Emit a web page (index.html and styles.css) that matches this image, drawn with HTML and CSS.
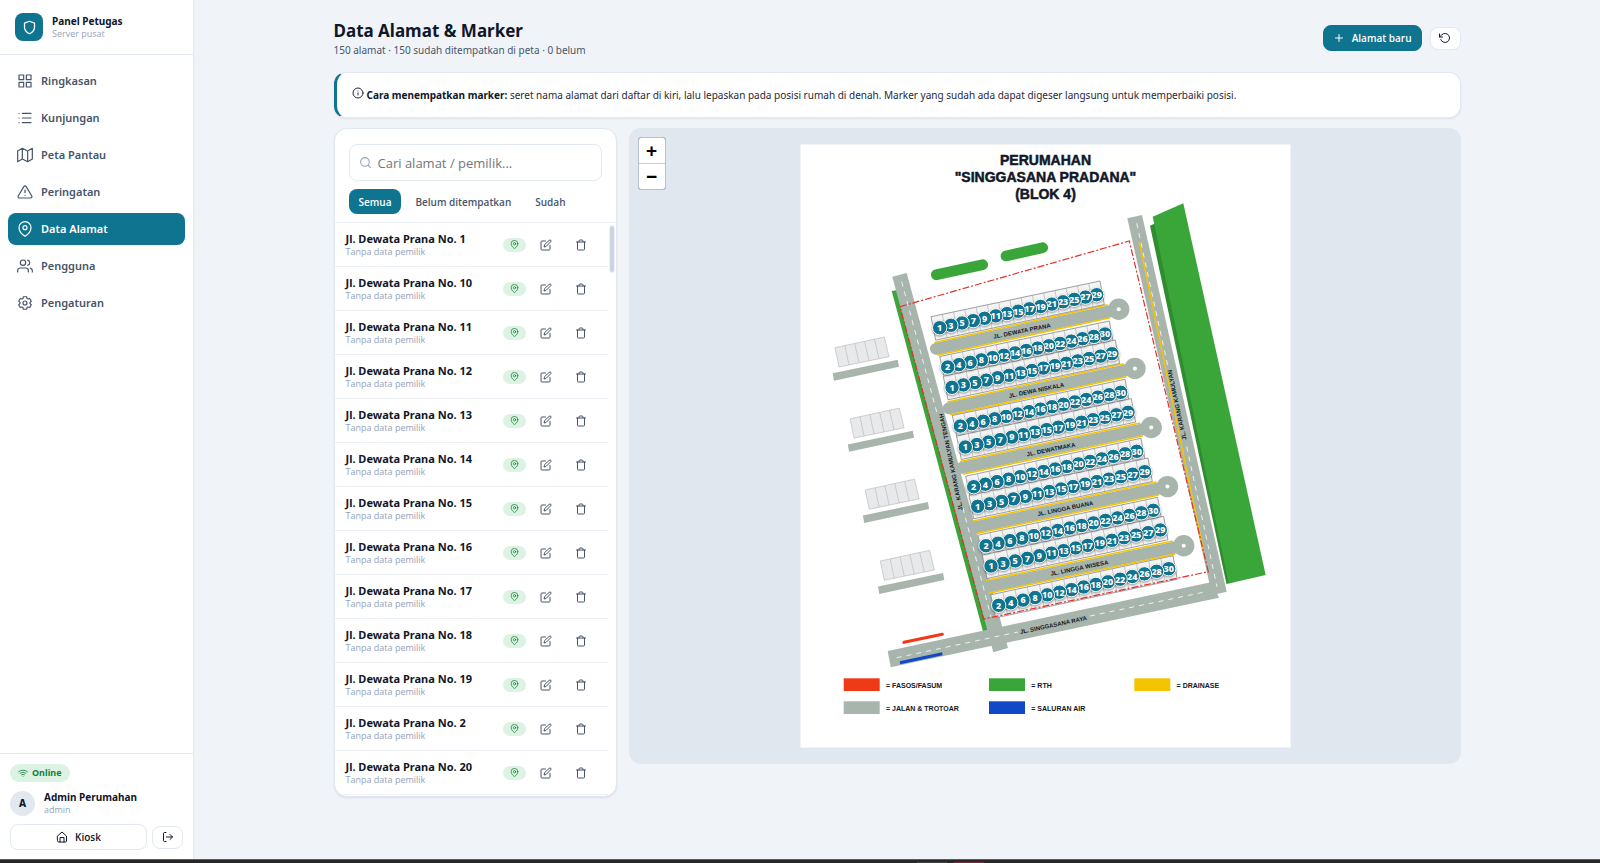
FILE: index.html
```html
<!DOCTYPE html>
<html lang="id">
<head>
<meta charset="utf-8">
<meta name="viewport" content="width=device-width, initial-scale=1">
<title>Data Alamat &amp; Marker</title>
<link rel="stylesheet" href="styles.css">
</head>
<body>
<svg class="sprite" aria-hidden="true">
  <symbol id="i-shield" viewBox="0 0 24 24"><path d="M12 22s8-4 8-10V5l-8-3-8 3v7c0 6 8 10 8 10z"/></symbol>
  <symbol id="i-grid" viewBox="0 0 24 24"><path d="M3 3h7v7H3zM14 3h7v7h-7zM14 14h7v7h-7zM3 14h7v7H3z"/></symbol>
  <symbol id="i-list" viewBox="0 0 24 24"><path d="M8 5h13M8 12h13M8 19h13M3 5h.01M3 12h.01M3 19h.01"/></symbol>
  <symbol id="i-map" viewBox="0 0 24 24"><path d="M1 6v16l7-4 8 4 7-4V2l-7 4-8-4zM8 2v16M16 6v16"/></symbol>
  <symbol id="i-alert" viewBox="0 0 24 24"><path d="M10.3 3.9 1.8 18a2 2 0 0 0 1.7 3h17a2 2 0 0 0 1.7-3L13.7 3.9a2 2 0 0 0-3.4 0zM12 9v4M12 17h.01"/></symbol>
  <symbol id="i-pin" viewBox="0 0 24 24"><path d="M21 10c0 7-9 13-9 13s-9-6-9-13a9 9 0 0 1 18 0z"/><circle cx="12" cy="10" r="3"/></symbol>
  <symbol id="i-users" viewBox="0 0 24 24"><path d="M17 21v-2a4 4 0 0 0-4-4H5a4 4 0 0 0-4 4v2M23 21v-2a4 4 0 0 0-3-3.9M16 3.1a4 4 0 0 1 0 7.8"/><circle cx="9" cy="7" r="4"/></symbol>
  <symbol id="i-cog" viewBox="0 0 24 24"><path d="M9.6 2.6h4.800l.7 2.700 1.300.7 2.700-.8 2.400 4.100-2 2v1.400l2 2-2.400 4.100-2.700-.8-1.300.7-.7 2.700H9.600l-.7-2.700-1.300-.7-2.700.8-2.400-4.100 2-2v-1.400l-2-2 2.400-4.100 2.700.8 1.300-.7z"/><circle cx="12" cy="12" r="3"/></symbol>
  <symbol id="i-info" viewBox="0 0 24 24"><circle cx="12" cy="12" r="10"/><path d="M12 16v-4M12 8h.01"/></symbol>
  <symbol id="i-search" viewBox="0 0 24 24"><circle cx="11" cy="11" r="8"/><path d="m21 21-4.300-4.300"/></symbol>
  <symbol id="i-edit" viewBox="0 0 24 24"><path d="M11 4H4a2 2 0 0 0-2 2v14a2 2 0 0 0 2 2h14a2 2 0 0 0 2-2v-7"/><path d="M18.500 2.500a2.100 2.100 0 0 1 3 3L12 15l-4 1 1-4z"/></symbol>
  <symbol id="i-trash" viewBox="0 0 24 24"><path d="M3 6h18M19 6v14a2 2 0 0 1-2 2H7a2 2 0 0 1-2-2V6M8 6V4a2 2 0 0 1 2-2h4a2 2 0 0 1 2 2v2"/></symbol>
  <symbol id="i-plus" viewBox="0 0 24 24"><path d="M12 5v14M5 12h14"/></symbol>
  <symbol id="i-reset" viewBox="0 0 24 24"><path d="M1 4v6h6M3.500 15a9 9 0 1 0 2.100-9.400L1 10"/></symbol>
  <symbol id="i-wifi" viewBox="0 0 24 24"><path d="M1.400 9a16 16 0 0 1 21.200 0M5 12.600a11 11 0 0 1 14 0M8.500 16.100a6 6 0 0 1 7 0M12 20h.01"/></symbol>
  <symbol id="i-home" viewBox="0 0 24 24"><path d="M3 10l9-8 9 8v10a2 2 0 0 1-2 2H5a2 2 0 0 1-2-2zM8 22v-9h8v9"/></symbol>
  <symbol id="i-out" viewBox="0 0 24 24"><path d="M8 3H5a2 2 0 0 0-2 2v14a2 2 0 0 0 2 2h3M16 17l5-5-5-5M21 12H9"/></symbol>
</svg>

<div class="app">
  <aside class="sidebar">
    <div class="brand">
      <span class="brand-logo"><svg class="icon"><use href="#i-shield"/></svg></span>
      <div class="stack"><strong class="name">Panel Petugas</strong><span class="muted">Server pusat</span></div>
    </div>
    <nav class="nav">
      <a class="nav-item" href="#ringkasan"><svg class="icon"><use href="#i-grid"/></svg>Ringkasan</a>
      <a class="nav-item" href="#kunjungan"><svg class="icon"><use href="#i-list"/></svg>Kunjungan</a>
      <a class="nav-item" href="#peta"><svg class="icon"><use href="#i-map"/></svg>Peta Pantau</a>
      <a class="nav-item" href="#peringatan"><svg class="icon"><use href="#i-alert"/></svg>Peringatan</a>
      <a class="nav-item active" href="#alamat" aria-current="page"><svg class="icon"><use href="#i-pin"/></svg>Data Alamat</a>
      <a class="nav-item" href="#pengguna"><svg class="icon"><use href="#i-users"/></svg>Pengguna</a>
      <a class="nav-item" href="#pengaturan"><svg class="icon"><use href="#i-cog"/></svg>Pengaturan</a>
    </nav>
    <div class="account">
      <span class="status"><svg class="icon"><use href="#i-wifi"/></svg>Online</span>
      <div class="user">
        <span class="avatar">A</span>
        <div class="stack"><strong class="name">Admin Perumahan</strong><span class="muted">admin</span></div>
      </div>
      <div class="account-actions">
        <button class="btn kiosk" type="button"><svg class="icon"><use href="#i-home"/></svg>Kiosk</button>
        <button class="btn square" type="button" aria-label="Keluar"><svg class="icon"><use href="#i-out"/></svg></button>
      </div>
    </div>
  </aside>

  <main class="main">
    <div class="content">
      <header class="page-head">
        <div>
          <h1>Data Alamat &amp; Marker</h1>
          <p class="summary">150 alamat · 150 sudah ditempatkan di peta · 0 belum</p>
        </div>
        <div class="head-actions">
          <button class="btn primary" type="button"><svg class="icon"><use href="#i-plus"/></svg>Alamat baru</button>
          <button class="btn square" type="button" aria-label="Muat ulang"><svg class="icon"><use href="#i-reset"/></svg></button>
        </div>
      </header>

      <section class="hint">
        <svg class="icon"><use href="#i-info"/></svg>
        <p><strong>Cara menempatkan marker:</strong> seret nama alamat dari daftar di kiri, lalu lepaskan pada posisi rumah di denah. Marker yang sudah ada dapat digeser langsung untuk memperbaiki posisi.</p>
      </section>

      <div class="workspace">
        <section class="panel">
          <div class="filters">
            <label class="search"><svg class="icon"><use href="#i-search"/></svg><input type="search" placeholder="Cari alamat / pemilik..." aria-label="Cari alamat atau pemilik"></label>
            <div class="tabs">
              <button class="tab active" type="button">Semua</button>
              <button class="tab" type="button">Belum ditempatkan</button>
              <button class="tab" type="button">Sudah</button>
            </div>
          </div>
          <div class="list-wrap">
            <ul class="list" id="list"></ul>
            <div class="scrollbar"><span class="thumb"></span></div>
          </div>
        </section>

        <section class="map">
          <svg class="plan" viewBox="629 128 832 636" role="img" aria-label="Denah perumahan">
            <rect x="800.500" y="144.500" width="490" height="603" fill="#fff"/>
            <g class="plan-title">
              <text x="1045.500" y="165">PERUMAHAN</text>
              <text x="1045.500" y="182">"SINGGASANA PRADANA"</text>
              <text x="1045.500" y="199">(BLOK 4)</text>
            </g>
            <path class="rth-dark" d="M1150 225.700 1156 223 1234 582 1226.500 584z"/>
            <path class="rth" d="M1152.700 216.700 1183.300 203.300 1265.700 575 1228.700 583.600z"/>
            <path class="rth" d="M891.700 291 898 290 989 630 983 631.500z"/>
            <path class="rth-line" d="M936.300 274.700 982.700 264.700M1006 256 1042.700 247.700"/>
            <g id="blocks"></g>
            <path class="road" d="M892.300 276.700 906.700 273 1008 648 993.300 652.300z"/>
            <path class="road" d="M1127.300 218.300 1142 215 1226.700 591.700 1212 595z"/>
            <path class="road" d="M887.700 651 1212 582 1219 597.700 890.700 667.300z"/>
            <g id="streets"></g>
            <path class="lane" d="M901.700 281.700 937.500 415M963 508 991 617M1136.700 223.300 1168 367M1186.700 446.700 1217 586.700M896.700 657.700 1018 632M1090 616 1207 591.500"/>
            <path class="drain" d="M1139.300 241.700 1178.300 430 1203.300 550"/>
            <g id="houses"></g>
            <path class="border-line" d="M900 306.700 1129.300 241 1208.300 571.700 983.600 619z"/>
            <path d="M904 642.300 942.300 634.300" stroke="#f03a17" stroke-width="3.200" stroke-linecap="round"/>
            <path d="M900 662.700 942.300 653.700" stroke="#1048c6" stroke-width="3.200"/>
            <g class="street-name">
              <text transform="translate(951 462) rotate(-101.500)">JL. KARANG KAMULYAN TENGAH</text>
              <text transform="translate(1177 405) rotate(-102)">JL. KARANG KAMULYAN</text>
              <text transform="translate(1053.500 625) rotate(-12)">JL. SINGGASANA RAYA</text>
            </g>
            <g id="markers"></g>
            <g class="legend">
              <rect x="843.700" y="678.300" width="36" height="12.700" fill="#f03a17"/><text x="886" y="687.600">= FASOS/FASUM</text>
              <rect x="989" y="678.300" width="36" height="12.700" fill="#3aa539"/><text x="1031.300" y="687.600">= RTH</text>
              <rect x="1134.300" y="678.300" width="36" height="12.700" fill="#f5c400"/><text x="1176.600" y="687.600">= DRAINASE</text>
              <rect x="843.700" y="701.300" width="36" height="12.700" fill="#a8b5ad"/><text x="886" y="710.600">= JALAN &amp; TROTOAR</text>
              <rect x="989" y="701.300" width="36" height="12.700" fill="#1048c6"/><text x="1031.300" y="710.600">= SALURAN AIR</text>
            </g>
          </svg>
          <div class="zoom">
            <button type="button" aria-label="Perbesar">+</button>
            <button type="button" aria-label="Perkecil">−</button>
          </div>
        </section>
      </div>
    </div>
  </main>
</div>
<div class="taskbar"><span class="task"></span><span class="task red"></span></div>
<script src="app.js"></script>
</body>
</html>
```
FILE: styles.css
```css
:root {
  --teal: #0e7490;
  --ink: #0f172a;
  --slate: #475569;
  --muted: #94a3b8;
  --line: #e2e8f0;
  --soft: #edf1f7;
  --green: #15803d;
  --mint: #dcf3e4;
}

* { box-sizing: border-box; }

body {
  margin: 0;
  min-height: 100vh;
  display: flex;
  flex-direction: column;
  background: #f0f4f9;
  color: var(--ink);
  font-family: "Noto Sans", "Open Sans", sans-serif;
  font-size: 11px;
  line-height: 16px;
}

h1, p, ul { margin: 0; padding: 0; }
button, input { font: inherit; color: inherit; }
a { color: inherit; text-decoration: none; }
.sprite { position: absolute; width: 0; height: 0; }

.icon {
  width: 12px;
  height: 12px;
  flex: none;
  fill: none;
  stroke: currentColor;
  stroke-width: 2;
  stroke-linecap: round;
  stroke-linejoin: round;
}

.app { flex: 1; display: flex; }

/* Sidebar */
.sidebar {
  width: 194px;
  flex: none;
  display: flex;
  flex-direction: column;
  background: #fff;
  border-right: 1px solid var(--line);
}
.brand {
  display: flex;
  align-items: center;
  gap: 9px;
  padding: 13px 15px;
  border-bottom: 1px solid var(--line);
}
.brand-logo {
  display: grid;
  place-items: center;
  width: 28px;
  height: 28px;
  border-radius: 8px;
  background: var(--teal);
  color: #fff;
}
.brand-logo .icon { width: 15px; height: 15px; }
.stack { display: flex; flex-direction: column; min-width: 0; }
.name {
  font-size: 11px;
  line-height: 14px;
  font-weight: 700;
}
.sidebar .name { font-size: 10px; }
.muted {
  font-family: "Open Sans", "Noto Sans", sans-serif;
  font-size: 9px;
  line-height: 12px;
  color: var(--muted);
}

.nav {
  flex: 1;
  display: flex;
  flex-direction: column;
  gap: 5px;
  padding: 10px 8px;
}
.nav-item {
  display: flex;
  align-items: center;
  gap: 8px;
  min-height: 32px;
  padding: 0 9px;
  border-radius: 8px;
  color: var(--slate);
  font-weight: 600;
}
.nav-item .icon { width: 16px; height: 16px; stroke-width: 1.8; }
.nav-item.active { background: var(--teal); color: #fff; }

.account {
  display: flex;
  flex-direction: column;
  gap: 8px;
  padding: 10px 10px 9px;
  border-top: 1px solid var(--line);
}
.status {
  align-self: flex-start;
  display: flex;
  align-items: center;
  gap: 4px;
  padding: 1px 8px;
  border-radius: 9px;
  background: var(--mint);
  color: var(--green);
  font-size: 9px;
  font-weight: 700;
}
.status .icon { width: 10px; height: 10px; }
.user { display: flex; align-items: center; gap: 9px; }
.avatar {
  display: grid;
  place-items: center;
  width: 25px;
  height: 25px;
  border-radius: 50%;
  background: var(--line);
  font-size: 10px;
  font-weight: 800;
}
.account-actions { display: flex; align-items: center; gap: 5px; }

.btn {
  display: inline-flex;
  align-items: center;
  justify-content: center;
  gap: 7px;
  height: 26px;
  padding: 0 9px;
  border: 1px solid var(--line);
  border-radius: 8px;
  background: #fff;
  font-family: "Open Sans", "Noto Sans", sans-serif;
  font-size: 10px;
  font-weight: 600;
}
.btn.kiosk { flex: 1; }
.btn.square { width: 31px; height: 23px; padding: 0; }
.btn.primary { border-color: var(--teal); background: var(--teal); color: #fff; }

/* Page */
.main { flex: 1; min-width: 0; padding: 21px 24px; }
.content {
  max-width: 1127px;
  margin: 0 auto;
  display: flex;
  flex-direction: column;
  gap: 10px;
}
.page-head {
  display: flex;
  align-items: flex-start;
  justify-content: space-between;
  padding-bottom: 4px;
}
h1 {
  font-size: 17px;
  line-height: 20px;
  font-weight: 700;
}
.summary { font-size: 10px; line-height: 16px; color: var(--slate); padding-top: 1px; }
.head-actions { display: flex; align-items: center; gap: 8px; padding-top: 4px; }

.hint {
  display: flex;
  align-items: center;
  gap: 3px;
  min-height: 46px;
  padding: 0 15px;
  border: 1px solid var(--line);
  border-left: 3px solid var(--teal);
  border-radius: 12px;
  background: #fff;
  box-shadow: 0 1px 2px #0f172a14;
  font-size: 10px;
  color: #1e293b;
}
.hint strong { color: var(--ink); }
.hint .icon { margin-bottom: 4px; }

.workspace {
  display: grid;
  grid-template-columns: 283px minmax(0, 1fr);
  gap: 12px;
  align-items: start;
}
.panel {
  overflow: hidden;
  border: 1px solid var(--line);
  border-radius: 13px;
  background: #fff;
  box-shadow: 0 1px 2px #0f172a1a;
}
.filters {
  display: flex;
  flex-direction: column;
  gap: 8px;
  padding: 15px 14px 8px;
  border-bottom: 1px solid var(--soft);
}
.search {
  display: flex;
  align-items: center;
  gap: 6px;
  height: 37px;
  padding: 0 9px;
  border: 1px solid var(--line);
  border-radius: 8px;
  color: var(--muted);
}
.search .icon { width: 13px; height: 13px; }
.search input {
  flex: 1;
  min-width: 0;
  border: 0;
  padding: 0;
  outline: 0;
  background: none;
  font-family: "Open Sans", "Noto Sans", sans-serif;
  font-size: 13px;
  color: var(--ink);
}
.search input::placeholder { color: #757575; }
.tabs { display: flex; gap: 4px; }
.tab {
  height: 25px;
  padding: 0 10px;
  border: 0;
  border-radius: 8px;
  background: none;
  color: var(--slate);
  font-family: "Open Sans", "Noto Sans", sans-serif;
  font-size: 10px;
  font-weight: 600;
}
.tab.active { background: var(--teal); color: #fff; }

.list-wrap { display: flex; padding-bottom: 1px; }
.list { flex: 1; min-width: 0; list-style: none; }
.row {
  display: flex;
  align-items: center;
  height: 44px;
  padding: 0 9px 0 11px;
  border-bottom: 1px solid var(--soft);
}
.row .stack { flex: 1; }
.placed {
  display: grid;
  place-items: center;
  width: 23px;
  height: 14px;
  border-radius: 7px;
  background: var(--mint);
  color: var(--green);
}
.placed .icon { width: 9px; height: 9px; }
.row-btn {
  display: grid;
  place-items: center;
  width: 35px;
  height: 24px;
  padding: 0;
  border: 0;
  background: none;
  color: var(--slate);
}
.placed + .row-btn { margin-left: 3px; }
.scrollbar { width: 8px; padding: 2px 1px; }
.thumb {
  display: block;
  height: 48px;
  border: 1px solid var(--soft);
  border-radius: 4px;
  background: #cbd5e1;
}

/* Map */
.map {
  position: relative;
  overflow: hidden;
  border-radius: 12px;
  background: #e0e7ef;
}
.plan { display: block; width: 100%; height: auto; fill: none; font-family: "Liberation Sans", sans-serif; font-weight: 700; }
.plan text { fill: #111827; }
.plan-title { font-size: 14px; text-anchor: middle; stroke: #111827; stroke-width: .5px; }
.legend { font-size: 7px; }
.street-name { font-size: 6px; text-anchor: middle; dominant-baseline: central; }
.road { fill: #a8b5ad; }
.street { stroke: #a8b5ad; stroke-width: 12px; stroke-linecap: round; }
.rth { fill: #3aa539; }
.rth-dark { fill: #2f8d30; }
.rth-line { stroke: #3aa539; stroke-width: 10.7px; stroke-linecap: round; }
.lane { stroke: #eef1ef; stroke-width: 1px; stroke-dasharray: 5 5; }
.drain { stroke: #f5c400; stroke-width: 1.5px; }
.border-line { stroke: #e5302a; stroke-width: 1.2px; stroke-dasharray: 7 2 2 2; }
.house { fill: #f4f4f5; stroke: #77777c; stroke-width: .7px; }
.house-split { stroke: #a5a5aa; stroke-width: .6px; }
.block { fill: #e8e9eb; stroke: #b3b5b9; stroke-width: .6px; }
.marker circle { fill: var(--teal); stroke: #fff; stroke-width: 1px; filter: drop-shadow(0 1px 1px #00000066); }
.plan .marker text { fill: #fff; font: 800 9px "Noto Sans", sans-serif; text-anchor: middle; }

.zoom {
  position: absolute;
  top: 9px;
  left: 9px;
  display: flex;
  flex-direction: column;
  border: 1px solid #a8adb3;
  outline: 1px solid #b9bfc6;
  outline-offset: -1px;
  border-radius: 3px;
  background: #fff;
}
.zoom button {
  width: 26px;
  height: 25px;
  padding: 0;
  border: 0;
  background: none;
  color: #000;
  font: 700 19px/24px "Liberation Sans", sans-serif;
}
.zoom button:first-child { height: 26px; border-bottom: 1px solid #ccc; }

.taskbar {
  display: flex;
  align-items: flex-end;
  justify-content: center;
  gap: 7px;
  height: 4px;
  padding-left: 300px;
  border-top: 1px solid #5a5c5e;
  background: #272727;
}
.task { width: 30px; height: 1px; background: #444; }
.task.red { background: #7d2f41; }
```
FILE: app.js
```js
const numbers = [1, 10, 11, 12, 13, 14, 15, 16, 17, 18, 19, 2, 20];
document.getElementById('list').innerHTML = numbers.map(n => `
  <li class="row">
    <div class="stack"><strong class="name">Jl. Dewata Prana No. ${n}</strong><span class="muted">Tanpa data pemilik</span></div>
    <span class="placed"><svg class="icon"><use href="#i-pin"/></svg></span>
    <button class="row-btn" type="button" aria-label="Ubah No. ${n}"><svg class="icon"><use href="#i-edit"/></svg></button>
    <button class="row-btn" type="button" aria-label="Hapus No. ${n}"><svg class="icon"><use href="#i-trash"/></svg></button>
  </li>`).join('');

// Each row of houses: first number, then centre of the first and last marker.
const rows = [
  [1, 939.7, 327.7, 1096.7, 294.7], [2, 947.7, 367, 1105, 334],
  [1, 952, 387.3, 1112, 353.7], [2, 960.3, 426, 1120.7, 392.3],
  [1, 965.3, 447, 1128, 412.3], [2, 973.7, 486.7, 1136.7, 451.3],
  [1, 977.7, 506.3, 1144.7, 471.7], [2, 986, 545.7, 1153.3, 510.3],
  [1, 991, 566, 1160.3, 530], [2, 998.7, 605.3, 1168.7, 568.7]
];
// Street name with the centre of its label.
const streets = [
  ['JL. DEWATA PRANA', 1022, 331], ['JL. DEWA NISKALA', 1036.5, 390.3],
  ['JL. DEWATMAKA', 1051, 449.5], ['JL. LINGGA BUANA', 1065.3, 508.5],
  ['JL. LINGGA WISESA', 1079.5, 568]
];

const mix = (a, b, t) => a + (b - a) * t;
const line = (cls, x1, y1, x2, y2) => `<path class="${cls}" d="M${x1} ${y1} ${x2} ${y2}"/>`;

function strip(cls, splitCls, tl, tr, br, bl, count) {
  let out = `<path class="${cls}" d="M${tl} ${tr} ${br} ${bl}z"/>`;
  for (let i = 1; i < count; i++) {
    const t = i / count;
    out += line(splitCls, mix(tl[0], tr[0], t), mix(tl[1], tr[1], t), mix(bl[0], br[0], t), mix(bl[1], br[1], t));
  }
  return out;
}

let blocks = '';
for (let i = 0; i < 4; i++) {
  const x = i * 15.1, y = i * 71.1;
  blocks += strip('block', 'block', [835 + x, 347.7 + y], [884.3 + x, 337 + y], [889 + x, 356.7 + y], [839 + x, 367 + y], 5);
  blocks += `<path class="road" d="M${832.7 + x} ${373.3 + y} ${897.7 + x} ${359.7 + y} ${899 + x} ${366.7 + y} ${834 + x} ${380.7 + y}z"/>`;
}
document.getElementById('blocks').innerHTML = blocks;

let roads = '', names = '';
streets.forEach(([name, cx, cy], i) => {
  const x = 936 + i * 12.8, y = 348.8 + i * 59.5, ex = 1118.7 + i * 16.25, ey = 309.3 + i * 59.1;
  roads += line('street', x, y, ex, ey) +
    line('drain', x - 1.5, y - 6.4, ex - 11, ey - 4.6) +
    line('drain', x + 1.5, y + 6.4, ex - 8.5, ey + 8.4) +
    `<circle class="road" cx="${ex}" cy="${ey}" r="10.7"/><circle cx="${ex}" cy="${ey}" r="2" fill="#fff"/>`;
  names += `<text transform="translate(${cx} ${cy}) rotate(-11.5)">${name}</text>`;
});
document.getElementById('streets').innerHTML = roads;
document.querySelector('.street-name').innerHTML += names;

const even = rows.filter(r => r[0] === 2), odd = rows.filter(r => r[0] === 1);
document.getElementById('houses').innerHTML =
  even.map(([, x1, y1, x2, y2]) => strip('house', 'house-split', [x1 - 8, y1 - 10.5], [x2 + 4.3, y2 - 13], [x2 + 8.6, y2 + 10.6], [x1 - 3, y1 + 12.5], 15)).join('') +
  odd.map(([, x1, y1, x2, y2]) => strip('house', 'house-split', [x1 - 8.7, y1 - 11], [x2 + 3.3, y2 - 13.7], [x2 + 7.6, y2 + 9.8], [x1 - 4, y1 + 12.5], 15)).join('');

let markers = '';
rows.forEach(([start, x1, y1, x2, y2]) => {
  for (let i = 14; i >= 0; i--) {
    const x = mix(x1, x2, i / 14).toFixed(1), y = mix(y1, y2, i / 14).toFixed(1);
    markers += `<g class="marker" transform="translate(${x} ${y})"><circle r="7.2"/><text y="3.3">${start + i * 2}</text></g>`;
  }
});
document.getElementById('markers').innerHTML = markers;
```
